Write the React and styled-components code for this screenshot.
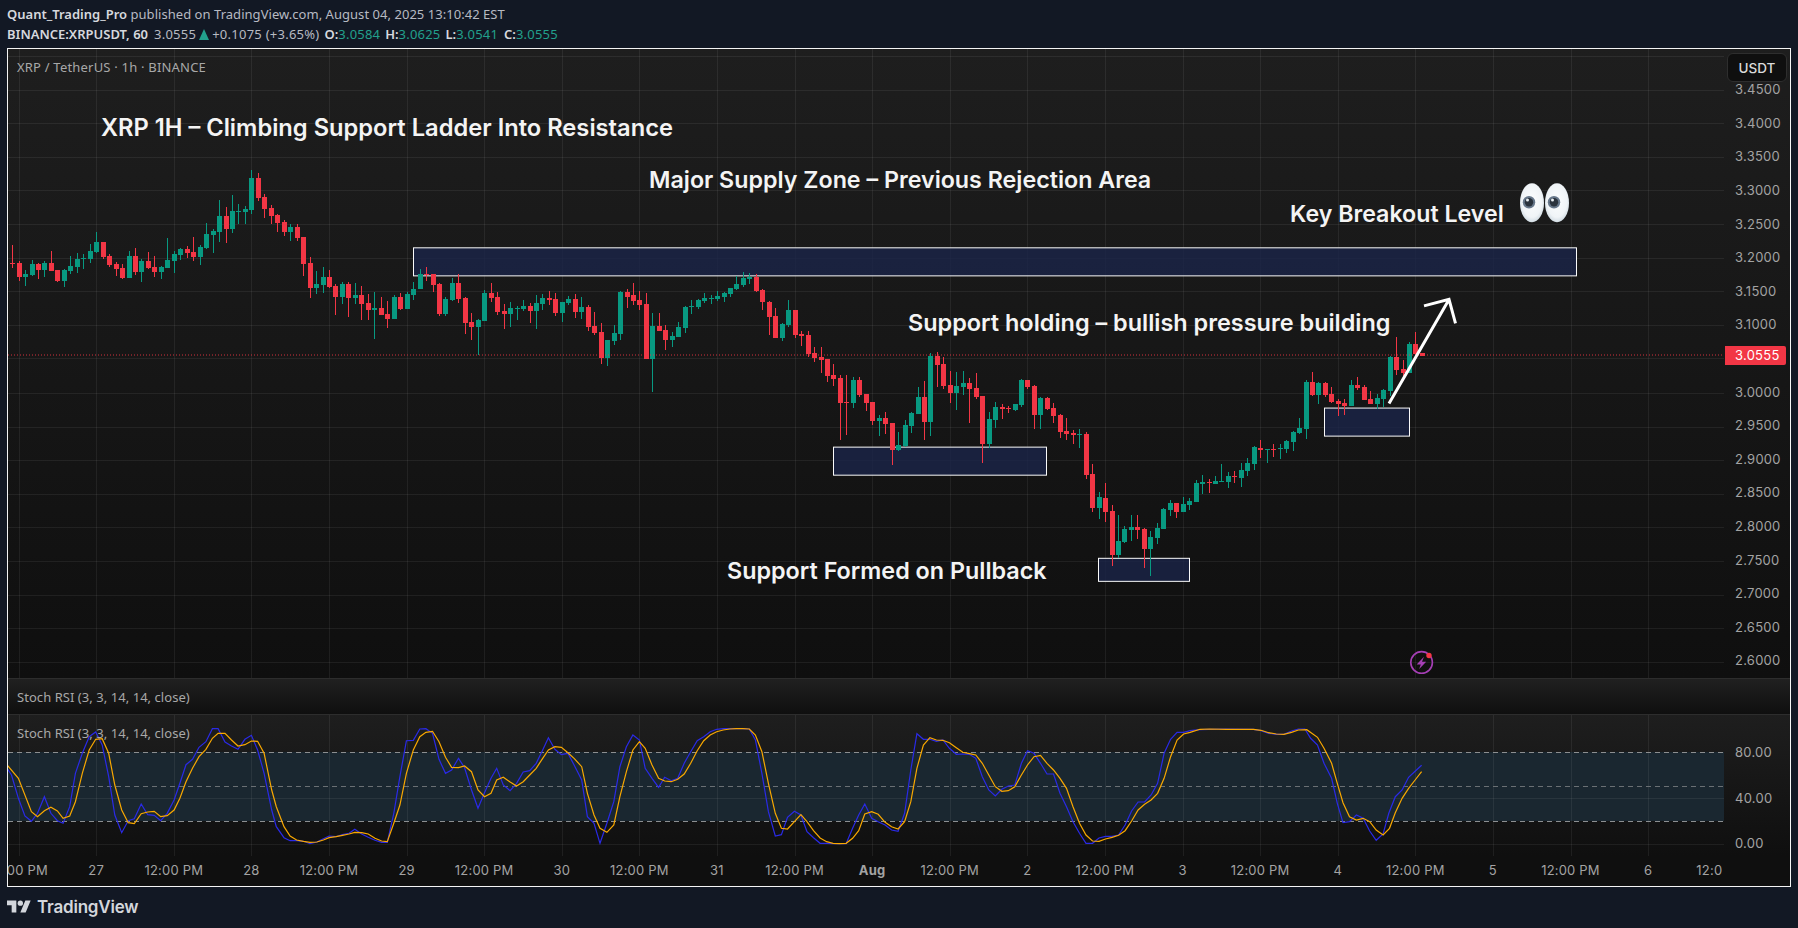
import React from "react";
import styled, { createGlobalStyle } from "styled-components";

const GlobalStyle = createGlobalStyle`
  html, body { margin: 0; padding: 0; background: #121824; overflow: hidden; }
  #root { width: 1798px; height: 928px; }
`;

const Page = styled.div`
  width: 1798px;
  height: 928px;
  background: #121824;
  display: flex;
  flex-direction: column;
  font-family: "Inter", "Liberation Sans", sans-serif;
`;

const Header = styled.header`
  height: 48px;
  box-sizing: border-box;
  padding: 5px 0 0 7px;
  font-family: "Noto Sans", "Liberation Sans", sans-serif;
  font-size: 13px;
  color: #b7bac2;
  display: flex;
  flex-direction: column;
  gap: 2px;
`;

const HeaderLine = styled.div`
  display: flex;
  align-items: center;
  height: 18px;
  white-space: pre;
`;

const Strong = styled.span`
  font-weight: 600;
  color: #d6d8de;
  margin-left: ${(p) => p.$gap || 0}px;
`;

const Muted = styled.span`
  margin-left: ${(p) => p.$gap || 0}px;
  letter-spacing: 0.04px;
`;

const Quote = styled(Muted)`
  letter-spacing: 0.25px;
`;

const Teal = styled.span`
  color: #22a08c;
  letter-spacing: 0.2px;
`;

const UpTriangle = styled.span`
  width: 0;
  height: 0;
  margin: 0 3px 0 3px;
  border-left: 5.5px solid transparent;
  border-right: 5.5px solid transparent;
  border-bottom: 11px solid #22a08c;
`;

const Frame = styled.section`
  margin-left: 7px;
  width: 1784px;
  height: 839px;
  box-sizing: border-box;
  border: 1px solid #f4f4f4;
  display: flex;
  flex-direction: column;
  overflow: hidden;
`;

const Pane = styled.div`
  position: relative;
  flex: none;
  height: ${(p) => p.$height}px;
  display: flex;
  background: linear-gradient(180deg, #1e1e1e 0%, #0f0f0f 100%);
  border-bottom: ${(p) => (p.$divider ? "1px solid #2d2d2d" : "none")};
`;

const CollapsedPane = styled.div`
  flex: none;
  height: 36px;
  box-sizing: border-box;
  border-bottom: 1px solid #2d2d2d;
  padding-left: 9px;
  display: flex;
  align-items: center;
  background: linear-gradient(180deg, #202020 0%, #0f0f0f 100%);
`;

const PlotSvg = styled.svg`
  flex: none;
  display: block;
  width: 1716px;
  height: 100%;
`;

const PriceAxis = styled.div`
  position: relative;
  flex: none;
  width: 66px;
  padding-top: ${(p) => p.$top}px;
  box-sizing: border-box;
  display: flex;
  flex-direction: column;
`;

const PriceLabel = styled.div`
  flex: none;
  height: ${(p) => p.$step}px;
  line-height: ${(p) => p.$step}px;
  padding-left: 11px;
  font-size: 13px;
  color: #a3a3a3;
  letter-spacing: 0.25px;
`;

const LastPrice = styled.div`
  position: absolute;
  left: 1px;
  top: 297px;
  width: 61px;
  height: 19px;
  box-sizing: border-box;
  padding-left: 10px;
  line-height: 19px;
  font-size: 13px;
  letter-spacing: 0.25px;
  color: #fff;
  background: #f23645;
  border-radius: 0 2px 2px 0;
`;

const CurrencyButton = styled.div`
  position: absolute;
  top: 4px;
  right: 3px;
  width: 60px;
  height: 29px;
  box-sizing: border-box;
  border: 1px solid #2e2e2e;
  border-radius: 6px;
  background: #0f0f0f;
  color: #dbdbdb;
  font-size: 13.5px;
  font-weight: 500;
  display: flex;
  align-items: center;
  justify-content: center;
`;

const Legend = styled.div`
  font-family: "Noto Sans", "Liberation Sans", sans-serif;
  font-size: 13px;
  letter-spacing: ${(p) => p.$spacing || 0.05}px;
  color: #a8a8a8;
  white-space: pre;
`;

const OverlayLegend = styled(Legend)`
  position: absolute;
  left: 9px;
  top: ${(p) => p.$top}px;
`;

const Note = styled.div`
  position: absolute;
  left: ${(p) => p.$x}px;
  top: ${(p) => p.$y}px;
  transform: translateY(-50%);
  font-size: ${(p) => p.$size || 23.35}px;
  font-weight: 600;
  color: #f4f4f4;
  white-space: pre;
`;

const TimeAxis = styled.div`
  flex: 1;
  display: flex;
  background: #0f0f0f;
`;

const TimeTrack = styled.div`
  flex: none;
  width: 1714px;
  overflow: hidden;
`;

const TimeRow = styled.div`
  display: flex;
  margin-left: -28.2px;
  height: 100%;
  align-items: center;
`;

const TimeLabel = styled.div`
  flex: none;
  width: 77.6px;
  text-align: center;
  font-size: 13px;
  letter-spacing: 0.2px;
  color: #a3a3a3;
  font-weight: ${(p) => (p.$bold ? 700 : 400)};
  white-space: nowrap;
  padding-bottom: 2px;
`;

const Footer = styled.footer`
  flex: 1;
  display: flex;
  align-items: center;
  gap: 6px;
  padding: 0 0 2px 7px;
  color: #d3d6dc;
  font-size: 17px;
  font-weight: 600;
  letter-spacing: -0.2px;
`;

const Logo = styled.svg`
  display: block;
  width: 24px;
  height: 19px;
`;

const GREEN = "#089981";
const RED = "#f23645";

const A = [
  [0,735,788,792,803],[0,783,789,830,842],[1,810,822,831,857],[1,780,792,825,828],[0,789,792,810,837],
  [1,783,789,810,831],[0,753,789,813,813],[0,810,810,843,846],[1,807,810,843,861],[1,768,798,813,822],
  [1,759,777,801,819],[1,762,774,777,807],[1,732,753,777,789],[1,696,726,756,760],[0,726,726,771,777],
  [0,762,768,795,801],[0,786,792,807,828],[0,792,804,834,837],[1,753,768,834,834],[0,744,768,816,825],
  [1,777,783,816,846],[0,756,783,804,807],[0,768,801,816,831],[1,798,801,816,837],[1,714,780,804,804],
  [1,753,762,783,819],[1,744,747,765,780],[0,738,747,759,774],[0,711,756,771,783],[1,735,741,771,795],
  [1,669,702,744,747],[1,687,693,705,759],[1,600,648,696,726],[0,620,648,687,729],[1,585,633,687,699],
  [1,612,633,636,672],[1,618,627,636,672],[1,510,534,630,642],[0,519,534,594,603],[0,582,591,627,654],
  [0,615,624,648,672],[0,642,645,669,696],[0,660,666,696,708],[1,672,681,696,723],[0,672,681,714,723],
  [0,711,711,792,828],[0,771,789,864,894],[1,813,852,864,882],[1,801,831,855,879],[0,810,831,861,864],
  [0,852,858,891,945],[1,846,852,891,912],[0,846,852,894,951],[1,849,885,894,912],[0,858,885,912,960],
  [0,882,909,930,960],[1,876,924,930,1017],[0,891,924,945,945],[0,903,942,957,984],[1,885,891,957,957],
  [0,879,891,927,930],[1,876,882,927,927],[1,846,867,885,900],[1,807,822,867,867],[0,801,822,826,843],
  [0,822,822,855,876],[0,849,852,942,948],[1,891,897,942,948],[1,834,849,900,903],[0,822,849,897,909],
  [0,891,894,969,1002],[0,939,966,981,1020],[1,957,960,981,1066],[1,870,879,963,963],[0,849,879,894,906],
  [0,876,891,936,945],[0,912,933,942,987],[1,906,924,942,981],[1,918,924,927,960],[1,900,918,927,933],
  [0,909,918,933,969],[1,885,909,933,987],[1,882,894,912,930],[0,873,894,900,915],[0,879,897,939,948],
  [1,906,906,939,966],[1,888,897,909,915],[0,882,897,936,954],[1,891,921,936,957],[0,915,921,981,993],
  [0,936,978,999,1005],
];
const B = [
  [0,280,306,384,399],[1,330,330,384,404],[1,286,309,333,345],[1,183,186,312,330],[0,177,186,201,234],
  [0,159,195,213,225],[0,183,210,225,240],[0,190,222,387,387],[1,249,288,387,483],[0,249,288,303,303],
  [0,285,300,330,360],[1,306,318,330,351],[1,276,291,321,321],[1,228,231,294,309],[1,210,228,231,252],
  [1,207,210,231,237],[1,189,204,213,219],[1,195,204,207,222],[1,183,198,207,213],[1,186,189,201,216],
  [1,174,174,192,201],[1,138,162,177,180],[1,126,144,165,171],[1,129,141,147,162],[0,132,141,183,186],
  [0,177,180,216,240],[0,213,216,261,315],[0,234,258,324,324],[1,279,282,324,333],[1,210,240,285,291],
  [0,240,240,315,324],[0,303,312,318,348],[0,303,315,372,381],[0,351,369,384,396],[0,351,381,390,426],
  [0,387,387,435,453],[0,399,432,444,465],[0,432,441,516,627],[0,432,513,516,612],[1,438,447,516,531],
  [0,438,447,492,498],[0,489,489,516,540],[0,513,513,570,582],[1,552,561,570,615],[0,543,561,579,609],
  [0,576,576,657,702],[1,603,642,657,660],[1,567,582,645,648],[1,543,546,585,606],[1,468,498,549,549],
  [0,450,498,573,627],[1,369,378,573,615],[0,366,378,402,468],[0,381,399,465,474],[0,420,462,486,516],
  [1,423,465,486,537],[1,420,456,468,492],[0,441,456,474,576],[0,426,471,498,504],[0,495,495,639,696],
  [1,543,564,639,651],[1,513,528,567,591],[0,519,528,534,564],[0,525,531,534,546],[1,519,519,537,540],
  [1,444,447,522,528],[0,447,447,468,474],[0,462,465,552,594],[1,498,501,552,594],[0,498,501,534,537],
  [0,516,531,555,576],[0,549,552,603,621],[0,561,600,609,627],[0,597,606,612,639],[1,594,609,612,651],
];
const C = [
  [0,213,219,342,354],[0,309,339,441,453],[1,393,408,441,474],[0,366,411,453,483],[0,432,450,582,615],
  [1,462,540,582,591],[1,495,504,543,546],[1,462,498,507,540],[0,462,498,507,534],[0,501,504,564,621],
  [1,510,528,564,645],[1,486,501,531,549],[1,441,444,504,504],[1,417,426,447,465],[0,426,426,453,471],
  [1,408,429,453,453],[1,411,420,432,447],[1,357,366,423,423],[1,342,363,369,399],[0,354,363,366,396],
  [1,345,360,369,369],[1,309,360,363,363],[1,333,345,363,381],[0,330,345,348,366],[1,306,327,351,378],
  [1,291,306,330,345],[1,255,258,309,327],[0,237,261,267,291],[1,264,264,267,306],[0,249,264,267,288],
  [1,249,261,264,294],[1,237,240,264,276],[1,210,213,243,270],[1,171,201,216,219],[1,57,63,204,234],
  [0,33,63,102,105],[1,63,66,102,129],[0,63,66,102,108],[0,78,99,123,126],[0,114,120,129,165],
  [0,114,126,135,162],[1,57,72,135,135],[0,48,72,81,87],[0,72,78,117,117],[0,90,114,129,129],
  [1,99,111,129,144],[1,84,87,114,138],
];
const D = [
  [1,618,621,720,735],[0,561,621,657,672],[0,630,654,666,690],[1,576,582,666,666],[0,546,582,612,618],
  [0,609,609,617,618],
];

const toBars = (list, base) =>
  list.map(([up, h, t, b, l]) => ({
    up,
    h: Math.round(base + h / 3),
    t: Math.round(base + t / 3),
    b: Math.round(base + b / 3),
    l: Math.round(base + l / 3),
  }));

const BARS = [...toBars(A, 0), ...toBars(B, 230), ...toBars(C, 360), ...toBars(D, 150)];

const Z6 = (pts) => pts.map(([x, y]) => [x / 2.613, 670 + y / 3]);
const Z7 = (pts) => pts.map(([x, y]) => [600 + x / 2.613, 700 + y / 3]);
const Z8 = (pts) => pts.map(([x, y]) => [1200 + x / 2.622, 630 + y / 3]);
const str = (pts) => pts.map(([x, y]) => `${x.toFixed(1)},${y.toFixed(1)}`).join(" ");

const BLUE_LINE = str([
  ...Z6([[20,298],[30,315],[48,385],[65,438],[82,454],[98,430],[116,380],[133,430],[150,452],[165,460],[182,410],[197,310],[215,250],[233,200],[250,186],[267,225],[284,320],[300,435],[318,488],[335,452],[351,446],[369,402],[386,434],[403,436],[420,452],[437,430],[455,390],[470,340],[486,284],[503,268],[520,232],[538,215],[555,176],[570,176],[588,216],[605,228],[622,238],[640,208],[657,196],[673,240],[690,310],[710,420],[722,470],[742,503],[758,512],[775,512],[793,514],[810,521],[828,516],[845,506],[860,498],[878,500],[895,494],[912,490],[927,478],[945,492],[962,502],[980,511],[997,517],[1012,517],[1029,430],[1045,320],[1062,212],[1080,211],[1097,177],[1113,176],[1130,190],[1147,268],[1164,310],[1180,300],[1198,265],[1214,293],[1232,360],[1249,415],[1266,368],[1283,325],[1298,295],[1315,345],[1333,362],[1350,340],[1367,306],[1384,302],[1401,280],[1418,240],[1433,203],[1450,238],[1467,254],[1484,250],[1500,285],[1520,330],[1535,440],[1552,460]]),
  ...Z7([[0,430],[18,370],[36,305],[52,200],[69,140],[86,105],[103,120],[118,205],[136,235],[153,262],[169,232],[186,242],[203,235],[220,190],[237,155],[254,122],[271,110],[288,95],[305,88],[322,86],[339,86],[356,86],[373,86],[390,87],[406,120],[423,220],[440,335],[458,408],[474,404],[490,352],[508,334],[525,345],[541,395],[558,413],[575,430],[592,430],[609,431],[626,431],[643,431],[660,385],[676,345],[692,312],[710,355],[727,365],[745,375],[762,390],[779,394],[796,340],[812,210],[828,101],[845,118],[862,118],[879,124],[896,120],[913,145],[931,163],[948,162],[965,163],[982,175],[999,230],[1016,270],[1033,288],[1050,268],[1067,258],[1084,255],[1101,190],[1117,152],[1134,160],[1151,190],[1168,222],[1185,222],[1202,280],[1219,320],[1236,365],[1253,400],[1270,430],[1287,430],[1304,414],[1321,409],[1338,409],[1355,405],[1372,375],[1389,333],[1406,306],[1423,306],[1440,285],[1457,250],[1474,160],[1491,118],[1508,97],[1525,97],[1542,92]]),
  ...Z8([[0,299],[70,297],[140,298],[160,302],[180,310],[200,313],[220,313],[240,303],[258,297],[275,297],[290,325],[308,345],[325,400],[345,445],[360,520],[375,578],[392,575],[410,555],[428,565],[445,603],[462,631],[480,612],[495,550],[512,500],[530,480],[547,442],[564,424],[581,406]]),
]);

const ORANGE_LINE = str([
  ...Z6([[20,287],[48,325],[82,425],[98,440],[116,422],[133,412],[150,423],[165,445],[182,438],[197,395],[215,310],[233,240],[250,208],[267,206],[284,250],[300,345],[318,420],[335,458],[351,461],[369,431],[386,426],[403,424],[420,440],[437,437],[455,420],[470,385],[486,335],[503,295],[520,260],[538,238],[555,205],[570,190],[588,190],[605,210],[622,228],[640,224],[657,213],[673,214],[690,250],[710,360],[722,410],[742,470],[758,498],[775,510],[793,514],[810,517],[828,516],[845,510],[860,503],[878,500],[895,496],[912,492],[927,487],[945,488],[962,492],[980,505],[997,513],[1012,515],[1029,460],[1045,405],[1062,310],[1080,240],[1097,200],[1113,187],[1130,184],[1147,215],[1164,262],[1180,292],[1198,293],[1214,288],[1232,305],[1249,360],[1266,380],[1283,370],[1298,330],[1315,322],[1333,336],[1350,348],[1367,335],[1384,315],[1401,295],[1418,265],[1433,240],[1450,230],[1467,232],[1484,248],[1500,265],[1520,290],[1535,370],[1552,435]]),
  ...Z7([[0,385],[18,397],[36,375],[52,290],[69,215],[86,150],[103,125],[118,145],[136,195],[153,235],[169,243],[186,245],[203,238],[220,222],[237,190],[254,152],[271,122],[288,105],[305,95],[322,90],[339,87],[356,86],[373,86],[390,87],[406,105],[423,155],[440,250],[458,340],[474,385],[490,387],[508,365],[525,344],[541,365],[558,392],[575,414],[592,425],[609,430],[626,431],[643,430],[660,415],[676,392],[692,342],[710,335],[727,343],[745,367],[762,380],[779,387],[796,365],[812,305],[828,205],[845,135],[862,113],[879,120],[896,121],[913,128],[931,143],[948,157],[965,161],[982,165],[999,190],[1016,225],[1033,260],[1050,274],[1067,272],[1084,260],[1101,225],[1117,195],[1134,170],[1151,166],[1168,190],[1185,210],[1202,235],[1219,265],[1236,320],[1253,370],[1270,405],[1287,423],[1304,424],[1321,417],[1338,412],[1355,406],[1372,392],[1389,363],[1406,330],[1423,313],[1440,300],[1457,280],[1474,235],[1491,170],[1508,120],[1525,102],[1542,97]]),
  ...Z8([[0,298],[25,297],[70,298],[140,298],[160,301],[180,308],[200,312],[220,313],[240,307],[258,300],[280,299],[308,322],[325,355],[345,400],[360,460],[375,518],[392,560],[410,570],[428,565],[445,575],[462,600],[480,615],[497,595],[512,548],[530,505],[547,475],[564,450],[581,425]]),
]);

const GRID = "rgba(255,255,255,0.065)";
const verticals = Array.from({ length: 22 }, (_, n) => 18.6 + 77.6 * n);
const priceY = (p) => 392 - (p - 3) * 672;
const priceLevels = Array.from({ length: 19 }, (_, k) => 3.5 - k * 0.05);
const priceLabels = priceLevels.slice(1).map((p) => p.toFixed(4));

const ZONES = [
  { x: 413, y: 247, w: 1163, h: 28 },
  { x: 833, y: 446, w: 213, h: 28 },
  { x: 1098, y: 557, w: 91, h: 23 },
  { x: 1324, y: 407, w: 85, h: 28 },
];

const TIME_LABELS = [
  "12:00 PM","27","12:00 PM","28","12:00 PM","29","12:00 PM","30","12:00 PM","31","12:00 PM","Aug",
  "12:00 PM","2","12:00 PM","3","12:00 PM","4","12:00 PM","5","12:00 PM","6","12:00 PM",
];

const Candles = () =>
  BARS.map((bar, i) => {
    const cx = Math.round(12.15 + 6.467 * i);
    const fill = bar.up ? GREEN : RED;
    return (
      <g key={i} fill={fill} shapeRendering="crispEdges">
        <rect x={cx} y={bar.h} width={1} height={Math.max(1, bar.l - bar.h)} />
        <rect x={cx - 2} y={bar.t} width={5} height={Math.max(1, bar.b - bar.t)} />
      </g>
    );
  });

const Eyes = () => (
  <g>
    <defs>
      <radialGradient id="eyeball" cx="50%" cy="45%" r="60%">
        <stop offset="0%" stopColor="#fbfdfe" />
        <stop offset="70%" stopColor="#f0f4f7" />
        <stop offset="100%" stopColor="#c6d3dc" />
      </radialGradient>
    </defs>
    {[[1532, 1529], [1557, 1554]].map(([c, p]) => (
      <g key={c}>
        <ellipse cx={c} cy={202.5} rx={12} ry={19.5} fill="url(#eyeball)" />
        <circle cx={p} cy={202} r={6.2} fill="#66778a" />
        <circle cx={p} cy={202} r={4.2} fill="#2a333d" />
        <circle cx={p - 1.5} cy={199.8} r={1.5} fill="#e8eef2" />
      </g>
    ))}
  </g>
);

const Bolt = () => (
  <g>
    <circle cx={1421.6} cy={661.5} r={10.8} fill="none" stroke="#a53fb5" strokeWidth={1.6} />
    <path d="M1424 655.9L1416.6 663.5h4.2l-1.6 4.6 7-7.4h-4.2z" fill="#a53fb5" />
    <circle cx={1429} cy={654.5} r={2.7} fill="#f23645" />
  </g>
);

const MainPlot = () => (
  <PlotSvg viewBox="8 49 1716 628" preserveAspectRatio="none">
    {verticals.map((x) => (
      <rect key={x} x={Math.round(x)} y={49} width={1} height={628} fill={GRID} shapeRendering="crispEdges" />
    ))}
    {priceLevels.map((p) => (
      <rect key={p} x={8} y={Math.round(priceY(p))} width={1716} height={1} fill={GRID} shapeRendering="crispEdges" />
    ))}
    {ZONES.map((z) => (
      <rect key={z.x} x={z.x + 0.5} y={z.y + 0.5} width={z.w} height={z.h} fill="rgba(26,36,72,0.8)" stroke="#fafafa" strokeWidth={1} />
    ))}
    <Candles />
    <line x1={8} x2={1724} y1={354.5} y2={354.5} stroke={RED} strokeDasharray="1 2" strokeOpacity={0.85} />
    <path d="M1389 403L1449 299M1424 305.5L1449 299L1455.5 323" fill="none" stroke="#fff" strokeWidth={3} />
    <Eyes />
    <Bolt />
  </PlotSvg>
);

const RsiPlot = () => (
  <PlotSvg viewBox="8 715 1716 141" preserveAspectRatio="none">
    <rect x={8} y={752} width={1716} height={69} fill="#1a2730" />
    {verticals.map((x) => (
      <rect key={x} x={Math.round(x)} y={715} width={1} height={141} fill={GRID} shapeRendering="crispEdges" />
    ))}
    {[798, 844].map((y) => (
      <rect key={y} x={8} y={y} width={1716} height={1} fill={GRID} shapeRendering="crispEdges" />
    ))}
    {[752, 786, 821].map((y) => (
      <line key={y} x1={8} x2={1724} y1={y + 0.5} y2={y + 0.5} stroke={y === 786 ? "#6a7074" : "#8c8f91"} strokeDasharray="5 4" />
    ))}
    <polyline points={BLUE_LINE} fill="none" stroke="#2a2ae6" strokeWidth={1.2} />
    <polyline points={ORANGE_LINE} fill="none" stroke="#f9a800" strokeWidth={1.2} />
  </PlotSvg>
);

export default function App() {
  return (
    <Page>
      <GlobalStyle />
      <Header>
        <HeaderLine>
          <Strong>Quant_Trading_Pro</Strong>
          <Muted> published on TradingView.com, August 04, 2025 13:10:42 EST</Muted>
        </HeaderLine>
        <HeaderLine>
          <Strong>BINANCE:XRPUSDT, 60</Strong>
          <Quote $gap={6}>3.0555</Quote>
          <UpTriangle />
          <Quote>+0.1075 (+3.65%)</Quote>
          <Strong $gap={5}>O:</Strong>
          <Teal>3.0584</Teal>
          <Strong $gap={5}>H:</Strong>
          <Teal>3.0625</Teal>
          <Strong $gap={5}>L:</Strong>
          <Teal>3.0541</Teal>
          <Strong $gap={6}>C:</Strong>
          <Teal>3.0555</Teal>
        </HeaderLine>
      </Header>
      <Frame>
        <Pane $height={629} $divider>
          <MainPlot />
          <OverlayLegend $top={9} $spacing={0.2}>XRP / TetherUS · 1h · BINANCE</OverlayLegend>
          <Note $x={93} $y={78} $size={23.7}>XRP 1H – Climbing Support Ladder Into Resistance</Note>
          <Note $x={641} $y={130} $size={23.25}>Major Supply Zone – Previous Rejection Area</Note>
          <Note $x={1282} $y={165} $size={23.2}>Key Breakout Level</Note>
          <Note $x={900} $y={273} $size={23.45}>Support holding – bullish pressure building</Note>
          <Note $x={719} $y={521}>Support Formed on Pullback</Note>
          <PriceAxis $top={24.2}>
            {priceLabels.map((label) => (
              <PriceLabel key={label} $step={33.6}>{label}</PriceLabel>
            ))}
            <LastPrice>3.0555</LastPrice>
            <CurrencyButton>USDT</CurrencyButton>
          </PriceAxis>
        </Pane>
        <CollapsedPane>
          <Legend>Stoch RSI (3, 3, 14, 14, close)</Legend>
        </CollapsedPane>
        <Pane $height={141}>
          <RsiPlot />
          <OverlayLegend $top={9}>Stoch RSI (3, 3, 14, 14, close)</OverlayLegend>
          <PriceAxis $top={15}>
            {["80.00", "40.00", "0.00"].map((label) => (
              <PriceLabel key={label} $step={45.5}>{label}</PriceLabel>
            ))}
          </PriceAxis>
        </Pane>
        <TimeAxis>
          <TimeTrack>
            <TimeRow>
              {TIME_LABELS.map((label, i) => (
                <TimeLabel key={i} $bold={label === "Aug"}>{label}</TimeLabel>
              ))}
            </TimeRow>
          </TimeTrack>
        </TimeAxis>
      </Frame>
      <Footer>
        <Logo viewBox="0 3 36 20">
          <path d="M14 22H7V11H0V4h14v18zM28 22h-8l7.5-18h8L28 22z" fill="currentColor" />
          <circle cx="20" cy="8" r="4" fill="currentColor" />
        </Logo>
        <span>TradingView</span>
      </Footer>
    </Page>
  );
}
